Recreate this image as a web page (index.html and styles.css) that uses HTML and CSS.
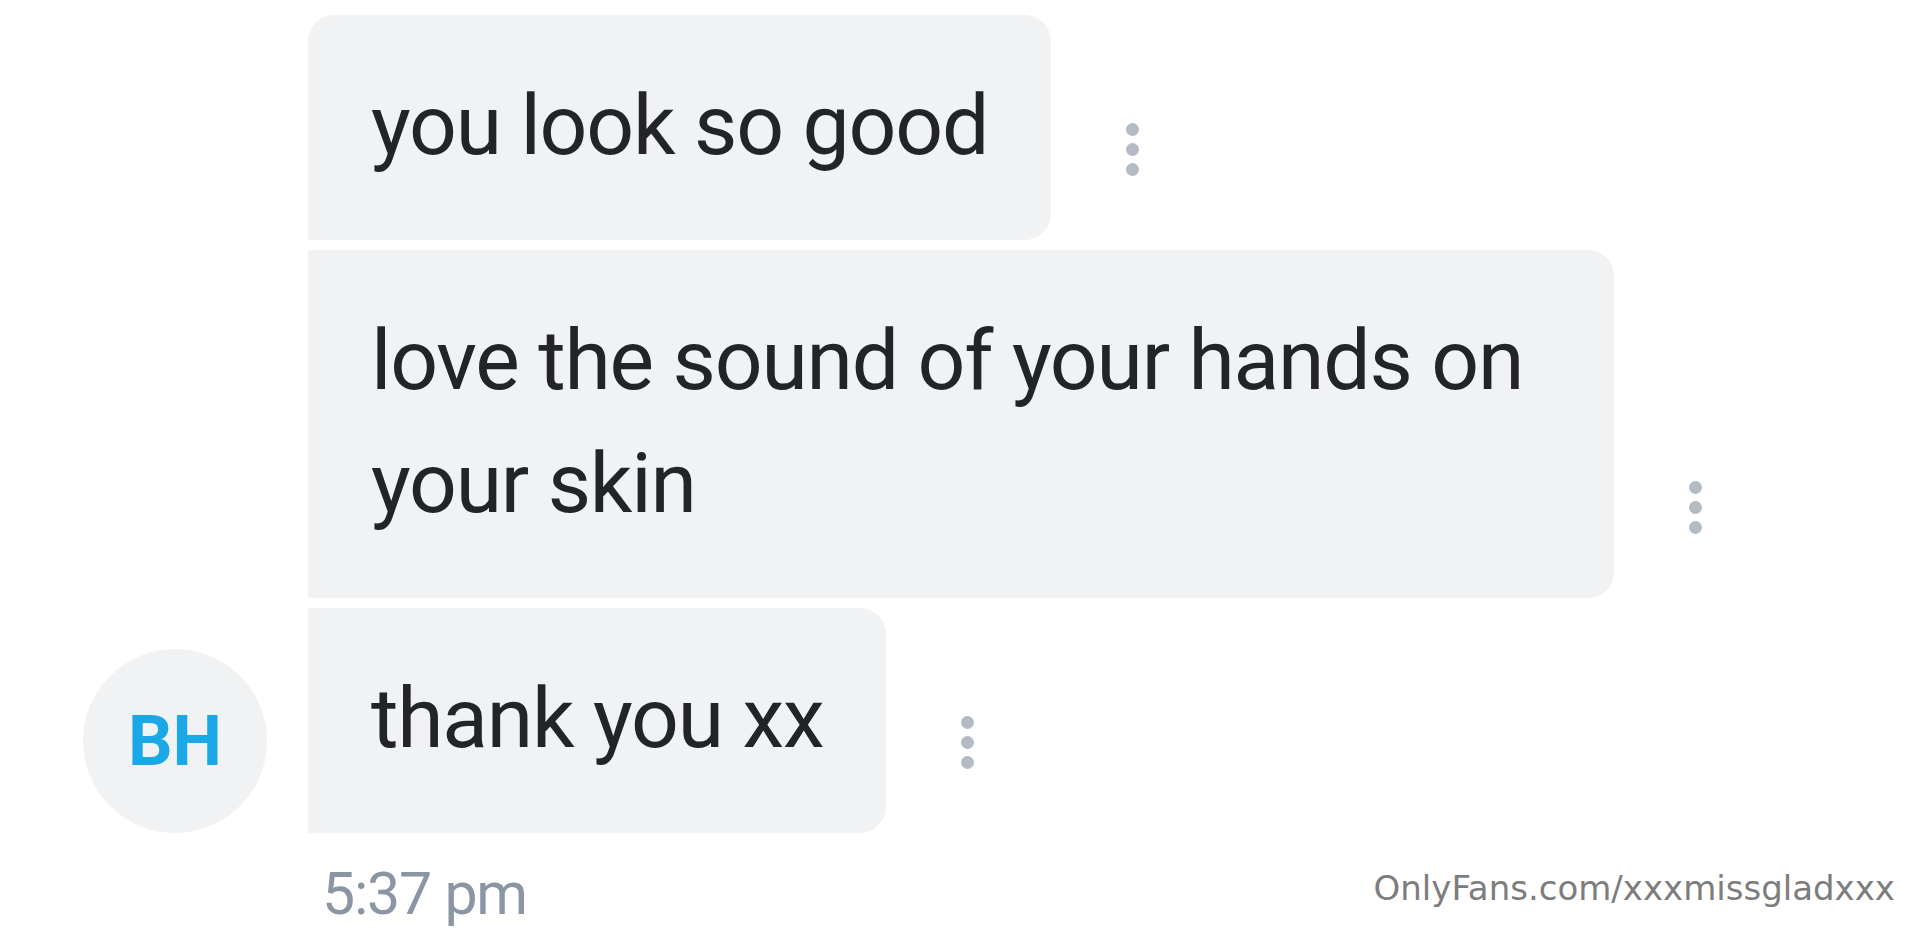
FILE: index.html
```html
<!DOCTYPE html>
<html lang="en">
<head>
<meta charset="utf-8">
<title>Chat</title>
<link rel="stylesheet" href="styles.css">
</head>
<body>
<main class="chat">
  <section class="group">
    <div class="avatar-col">
      <div class="avatar">BH</div>
    </div>
    <div class="messages">
      <div class="msg">
        <div class="bubble first">you look so good</div>
        <div class="more"><span></span><span></span><span></span></div>
      </div>
      <div class="msg">
        <div class="bubble">love the sound of your hands on your skin</div>
        <div class="more"><span></span><span></span><span></span></div>
      </div>
      <div class="msg">
        <div class="bubble">thank you xx</div>
        <div class="more"><span></span><span></span><span></span></div>
      </div>
    </div>
  </section>
  <div class="time">5:37 pm</div>
</main>
<div class="watermark">OnlyFans.com/xxxmissgladxxx</div>
</body>
</html>
```
FILE: styles.css
```css
html, body {
  margin: 0;
  padding: 0;
  background: #ffffff;
}
body {
  width: 1920px;
  height: 934px;
  overflow: hidden;
  position: relative;
  font-family: Roboto, "Liberation Sans", sans-serif;
}
.chat {
  padding: 15px 0 0 83px;
}
.group {
  display: flex;
  align-items: flex-end;
  gap: 41px;
}
.avatar-col {
  display: flex;
  align-items: flex-end;
}
.avatar {
  width: 184px;
  height: 184px;
  border-radius: 50%;
  background: #f1f2f4;
  color: #1aa9e6;
  font-weight: 700;
  font-size: 70px;
  display: flex;
  align-items: center;
  justify-content: center;
}
.messages {
  display: flex;
  flex-direction: column;
  gap: 10px;
}
.msg {
  display: flex;
  align-items: flex-end;
}
.bubble {
  background: #f1f2f4;
  color: #232428;
  font-size: 84px;
  line-height: 123px;
  letter-spacing: -1.2px;
  padding: 49px 63px 53px 63px;
  border-radius: 0 26px 26px 0;
  max-width: 1180px;
}
.bubble.first {
  border-radius: 26px 26px 26px 0;
}
.more {
  display: flex;
  flex-direction: column;
  gap: 7px;
  margin: 0 0 64px 75px;
}
.more span {
  width: 13px;
  height: 13px;
  border-radius: 50%;
  background: #b4bbc4;
}
.time {
  margin: 25px 0 0 239px;
  font-size: 59px;
  line-height: 71px;
  letter-spacing: -1.2px;
  color: #8a96a3;
}
.watermark {
  position: absolute;
  right: 25px;
  top: 868px;
  font-family: "DejaVu Sans", sans-serif;
  font-size: 34px;
  line-height: 40px;
  color: #7d7d7d;
}
```
